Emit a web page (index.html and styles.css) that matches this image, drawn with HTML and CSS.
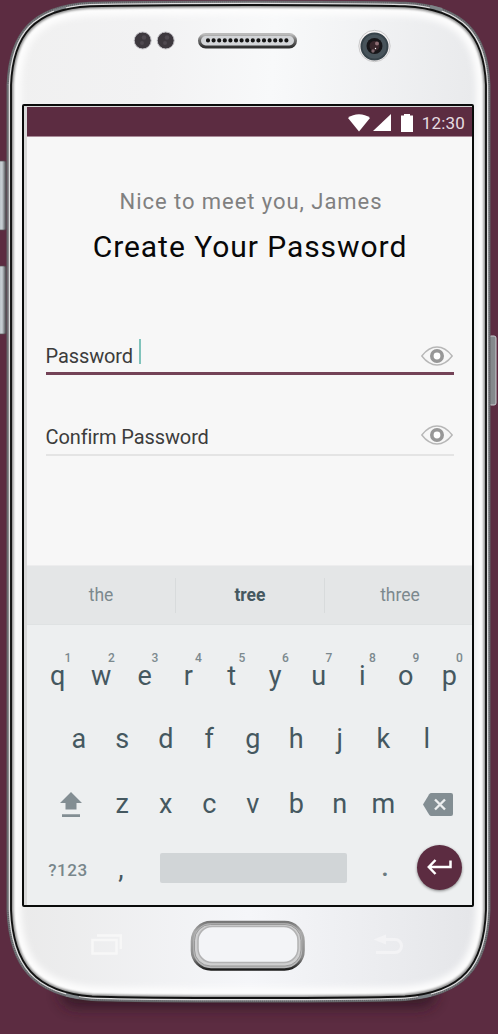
FILE: index.html
```html
<!DOCTYPE html>
<html lang="en">
<head>
<meta charset="utf-8">
<title>Create Your Password</title>
<link rel="stylesheet" href="styles.css">
</head>
<body>
<div class="phone">
  <svg class="shell" viewBox="0 0 498 1034" aria-hidden="true">
    <defs>
      <linearGradient id="face" x1="0" y1="0" x2="1" y2="0.12">
        <stop offset="0" stop-color="#f0f0f0"/><stop offset=".3" stop-color="#f2f2f3"/>
        <stop offset=".55" stop-color="#f8f9fa"/><stop offset="1" stop-color="#e8e9eb"/>
      </linearGradient>
      <linearGradient id="chin" x1="0" y1="0" x2="1" y2="0">
        <stop offset="0" stop-color="#e9e9e9"/><stop offset=".5" stop-color="#f5f6f9"/><stop offset="1" stop-color="#e3e4e7"/>
      </linearGradient>
      <linearGradient id="side" x1="0" y1="0" x2="1" y2="0">
        <stop offset="0" stop-color="#a9b3b8"/><stop offset=".6" stop-color="#c8d0d4"/><stop offset="1" stop-color="#4a4a4e"/>
      </linearGradient>
      <linearGradient id="ring" x1="0" y1="0" x2="0" y2="1">
        <stop offset="0" stop-color="#777"/><stop offset=".2" stop-color="#aaa"/><stop offset=".75" stop-color="#888"/><stop offset="1" stop-color="#1c1c1c"/>
      </linearGradient>
      <linearGradient id="grille" x1="0" y1="0" x2="0" y2="1">
        <stop offset="0" stop-color="#bbb"/><stop offset=".4" stop-color="#777"/><stop offset="1" stop-color="#303030"/>
      </linearGradient>
      <filter id="soft" x="-10%" y="-10%" width="120%" height="120%"><feGaussianBlur stdDeviation="3"/></filter>
      <filter id="fine" x="-5%" y="-5%" width="110%" height="110%"><feGaussianBlur stdDeviation="1.3"/></filter>
      <filter id="drop" x="-20%" y="-100%" width="140%" height="300%"><feGaussianBlur stdDeviation="7"/></filter>
      <path id="edge" d="M11 85C13 35 34 9 90 6.200C150 4.500 350 4.500 405 6.200C462 9 484 35 486 85V910C484 966 462 992 405 996.500C350 998.500 150 998.500 92 996.500C35 992 13 964 11 910Z"/>
      <clipPath id="body"><use href="#edge"/></clipPath>
    </defs>
    <rect x="60" y="978" width="376" height="30" rx="15" fill="#2d1220" opacity=".75" filter="url(#drop)"/>
    <rect x="-4" y="161" width="10" height="69" rx="2" fill="url(#side)" stroke="#555" stroke-width=".7"/>
    <rect x="-4" y="266" width="10" height="68" rx="2" fill="url(#side)" stroke="#555" stroke-width=".7"/>
    <rect x="489" y="336" width="7" height="69" rx="2" fill="#85898c" stroke="#c6cace"/>
    <use href="#edge" fill="none" stroke="#626367" stroke-width="9"/>
    <use href="#edge" fill="none" stroke="#7c7d80" stroke-width="7.500" stroke-dasharray="1 1"/>
    <use href="#edge" fill="none" stroke="#dededf" stroke-width="4.500"/>
    <path d="M54 11.500l12-3.200M430 7l12 3M66 994.500l13 2.500M418 997l13-2.500" stroke="#7e8488" stroke-width="4" fill="none"/>
    <use href="#edge" fill="url(#face)"/>
    <g clip-path="url(#body)">
      <rect y="907" width="498" height="100" fill="url(#chin)"/>
      <use href="#edge" fill="none" stroke="#fdfdfd" stroke-width="20" filter="url(#soft)"/>
      <use href="#edge" fill="none" stroke="#8a8a8a" stroke-width="5" filter="url(#fine)"/>
    </g>
    <use href="#edge" fill="none" stroke="#111" stroke-width="1.900"/>
    <g stroke="#c4c3c8" fill="#3d383e"><circle cx="142.700" cy="40.500" r="8.500"/><circle cx="165.700" cy="40.500" r="8.500"/></g>
    <g fill="#4f4950"><circle cx="144" cy="37.500" r="2.300"/><circle cx="142" cy="43" r="2"/><circle cx="167" cy="37.500" r="2.300"/><circle cx="165" cy="43" r="2"/></g>
    <rect x="199.500" y="34.500" width="96" height="12.500" rx="6.200" fill="#d3d5d8" stroke="url(#grille)" stroke-width="3"/>
    <path d="M208 40.400H288" stroke="#151515" stroke-width="4.200" stroke-linecap="round" stroke-dasharray="0 5.600"/>
    <circle cx="374.500" cy="46" r="15.700" fill="#f7f4f4" stroke="#bebebf" stroke-width=".8"/>
    <circle cx="374.500" cy="46.500" r="13" fill="#48545b" stroke="#37434a" stroke-width="2"/>
    <circle cx="374.500" cy="46" r="8" fill="#171619"/><circle cx="374.500" cy="46" r="5" fill="#38262b"/>
    <circle cx="377" cy="43.500" r="2" fill="#8b6c72"/><circle cx="373" cy="51" r="1.700" fill="#7c666c"/><circle cx="375.500" cy="48.500" r=".7" fill="#fff"/>
    <rect x="192" y="922" width="111.500" height="47.500" rx="19" fill="#b7b7b8" stroke="url(#ring)" stroke-width="2.600"/>
    <rect x="194.500" y="924.500" width="106.500" height="41.500" rx="16" fill="#cfcfd0" stroke="#8e8e8e" stroke-width=".8"/>
    <rect x="198" y="926.500" width="100" height="36" rx="14" fill="#f3f4f7" stroke="#b2b2b3" stroke-width="1.500"/>
    <g fill="none" stroke="#f7f7f7" stroke-width="2.500"><rect x="92.500" y="940" width="24" height="13.500"/><path d="M97 935.500H120.800V949"/></g>
    <path d="M384 939.500H395a6.500 6.500 0 0 1 0 13H376" fill="none" stroke="#f3f3f5" stroke-width="3"/><path d="M373.500 939.500L386 934.500V944.500Z" fill="#f3f3f5"/>
  </svg>

  <main class="screen">
    <header class="status">
      <svg width="22" height="18" viewBox="0 0 22 18"><path d="M0 4C6-1 16-1 22 4L11 17.500Z" fill="#fff"/></svg>
      <svg class="signal" width="18" height="17" viewBox="0 0 18 17"><path d="M18 0V17H0Z" fill="#fff"/></svg>
      <svg class="battery" width="12" height="18" viewBox="0 0 12 18"><path d="M3 0H9V1.500H12V18H0V1.500H3Z" fill="#fff"/></svg>
      <time>12:30</time>
    </header>
    <section class="form">
      <p class="greeting">Nice to meet you, James</p>
      <h1 class="title">Create Your Password</h1>
      <label class="field active"><span>Password</span><i class="caret"></i>
        <svg class="eye" width="32" height="20" viewBox="0 0 32 20"><path d="M.8 10C10-2 22-2 31.200 10C22 22 10 22 .8 10Z" fill="none" stroke="#b7b7b7" stroke-width="1.400"/><circle cx="16" cy="10" r="5.200" fill="#fff" stroke="#979797" stroke-width="3.600"/></svg>
      </label>
      <label class="field confirm"><span>Confirm Password</span>
        <svg class="eye" width="32" height="20" viewBox="0 0 32 20"><path d="M.8 10C10-2 22-2 31.200 10C22 22 10 22 .8 10Z" fill="none" stroke="#b7b7b7" stroke-width="1.400"/><circle cx="16" cy="10" r="5.200" fill="#fff" stroke="#979797" stroke-width="3.600"/></svg>
      </label>
    </section>
    <section class="keyboard">
      <div class="suggestions"><span>the</span><b>tree</b><span>three</span></div>
      <div class="row top">
        <span>q<sup>1</sup></span><span>w<sup>2</sup></span><span>e<sup>3</sup></span><span>r<sup>4</sup></span><span>t<sup>5</sup></span><span>y<sup>6</sup></span><span>u<sup>7</sup></span><span>i<sup>8</sup></span><span>o<sup>9</sup></span><span>p<sup>0</sup></span>
      </div>
      <div class="row home"><span>a</span><span>s</span><span>d</span><span>f</span><span>g</span><span>h</span><span>j</span><span>k</span><span>l</span></div>
      <div class="row lower">
        <svg class="shift" width="22" height="26" viewBox="0 0 22 26"><path d="M11 0L22 11H16.500V17.500H5.500V11H0ZM2 22.300H20V25H2Z" fill="#838e93"/></svg>
        <span>z</span><span>x</span><span>c</span><span>v</span><span>b</span><span>n</span><span>m</span>
        <svg class="erase" width="30" height="23" viewBox="0 0 30 23"><path d="M8.500 0H28Q30 0 30 2V21Q30 23 28 23H8.500Q7 23 6.200 21.700L0 11.500L6.200 1.300Q7 0 8.500 0Z" fill="#838e93"/><path d="M12 6.500L22 16.500M22 6.500L12 16.500" stroke="#edeff0" stroke-width="2.400"/></svg>
      </div>
      <div class="row bottom">
        <span class="mode">?123</span><span class="comma">,</span><div class="space"></div><span class="dot">.</span>
        <div class="enter"><svg width="25" height="16" viewBox="0 0 25 16"><path d="M23.500 1.500V8H2M8.500 1L1.800 8L8.500 15" fill="none" stroke="#fff" stroke-width="2.500"/></svg></div>
      </div>
    </section>
  </main>
</div>
</body>
</html>
```
FILE: styles.css
```css
* { box-sizing: border-box; }
body { margin: 0; background: #5c2c41; font-family: Roboto, "Liberation Sans", sans-serif; overflow: hidden; }
svg { display: block; flex: none; }
.phone { position: relative; width: 498px; height: 1034px; padding: 104px 24px 0 22px; }
.shell { position: absolute; top: 0; left: 0; width: 498px; height: 1034px; }
.screen { position: relative; width: 452px; height: 803px; border: 2px solid #090b0a; border-radius: 2px; background: #f7f7f7; display: flex; flex-direction: column; box-shadow: inset 3px 1px 0 #d8d8d8; padding: 1px 0 0 3px; }
.status { height: 30px; display: flex; align-items: center; justify-content: flex-end; padding-right: 7px; background: #5c2c41; border-bottom: 1px solid #a98b98; color: #e5dce0; font-size: 17px; letter-spacing: .2px; padding-top: 2px; }
.signal { margin-left: 3px; }
.battery { margin: 0 9px 0 10px; }
.form { height: 428px; padding: 51px 18px 0 19px; text-align: center; }
.greeting { margin: 0 0 0 2px; font-size: 22px; line-height: 28px; letter-spacing: .95px; color: #808080; }
.title { margin: 12px 0 0; font-size: 30px; line-height: 38px; font-weight: 400; letter-spacing: .95px; color: #080808; white-space: nowrap; }
.field { display: flex; align-items: center; font-size: 20px; letter-spacing: -.1px; color: #3c3c3c; }
.field span { margin-left: -.5px; }
.active { margin-top: 70px; height: 39px; padding-top: 4px; border-bottom: 3px solid #744357; }
.active .caret { margin-bottom: 10px; }
.confirm { margin-top: 40px; height: 41px; border-bottom: 2px solid #e4e4e4; }
.confirm span { padding-top: 5px; }
.eye { margin-left: auto; margin-right: 1px; }
.caret { width: 2px; height: 25px; margin-left: 5.5px; background: #80c3bb; }
.keyboard { flex: 1; background: #edeff0; color: #455860; }
.suggestions { height: 60px; display: grid; grid-template-columns: 148px 149px 1fr; align-items: center; text-align: center; background: #e4e6e7; border-bottom: 1px solid #dfe2e3; border-top: 1px solid #ededee; font-size: 17.5px; color: #7c898e; }
.suggestions > * { height: 35px; line-height: 35px; }
.suggestions > * + * { border-left: 1px solid #d8dbdc; }
.suggestions > :last-child { padding-left: 3px; }
.suggestions b { color: #455860; font-weight: 700; }
.row { height: 65px; display: flex; align-items: center; font-size: 27px; }
.row > span { width: 43.5px; flex: none; text-align: center; }
.top { padding: 20px 0 0 9px; height: 81px; }
.top > span { position: relative; }
.top sup { position: absolute; left: 28.5px; top: -9px; font-size: 12px; line-height: 14px; font-weight: 500; color: #7c898e; }
.home { padding-left: 30px; }
.lower { padding-left: 33px; }
.shift { margin: 2px 18.5px 0 0; }
.erase { margin: 2px 0 0 17.5px; }
.bottom { height: 62px; }
.bottom > .mode { width: 44px; margin-left: 19px; padding-top: 6px; font-size: 17px; font-weight: 500; letter-spacing: .6px; color: #78868b; }
.bottom > .comma { width: 20px; margin-left: 21px; padding-top: 3px; }
.space { width: 187px; height: 30px; margin: 2px 0 0 29px; border-radius: 2px; background: #d1d5d7; }
.bottom > .dot { width: 20px; margin: 0 21.5px 0 28px; font-weight: 500; color: #6b7a80; }
.enter { width: 45px; height: 45px; border-radius: 50%; background: #5c2c41; box-shadow: 0 1px 3px #0007; display: grid; place-items: center; }
```
